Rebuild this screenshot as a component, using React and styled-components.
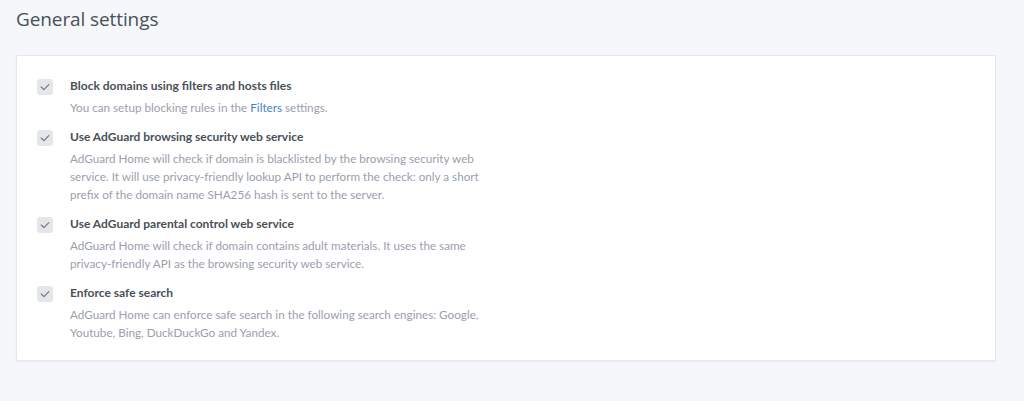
import React from "react";
import styled, { createGlobalStyle } from "styled-components";

const Global = createGlobalStyle`
  html, body {
    margin: 0;
    background: #f5f7fb;
  }
  body {
    font-family: "Open Sans", "Noto Sans", "Liberation Sans", sans-serif;
    -webkit-font-smoothing: antialiased;
  }
`;

const Page = styled.main`
  padding: 7px 28px 40px 16px;
`;

const Heading = styled.h1`
  margin: 0 0 24px;
  font-size: 19px;
  line-height: 24px;
  font-weight: 400;
  color: #495057;
  letter-spacing: -0.1px;
`;

const Card = styled.section`
  background: #fff;
  border: 1px solid #e3e7ee;
  border-radius: 2px;
  box-shadow: 0 1px 2px rgba(0, 0, 0, 0.05);
  padding: 20px 20px 19px;
  display: flex;
  flex-direction: column;
  gap: 11px;
`;

const Row = styled.label`
  display: flex;
  align-items: flex-start;
  gap: 17px;
`;

const Box = styled.span`
  flex: none;
  width: 16px;
  height: 16px;
  margin-top: 3px;
  border-radius: 3px;
  background: #e4e6ea;
  display: flex;
  align-items: center;
  justify-content: center;
`;

const Text = styled.div`
  display: flex;
  flex-direction: column;
  gap: 2px;
  font-family: Lato, "Open Sans", sans-serif;
`;

const Title = styled.div`
  font-size: 12px;
  line-height: 20px;
  font-weight: 700;
  color: #495057;
`;

const Desc = styled.div`
  max-width: 430px;
  font-size: 11.7px;
  line-height: 18px;
  color: #9aa0ac;
`;

const Link = styled.a`
  color: #467fcf;
  text-decoration: none;
`;

const Check = () => (
  <svg width="12" height="12" viewBox="0 0 12 12">
    <polyline
      points="2.2,6 4.9,8.7 9.8,3.6"
      fill="none"
      stroke="#6f747c"
      strokeWidth="1.1"
      strokeLinecap="round"
      strokeLinejoin="round"
    />
  </svg>
);

const settings = [
  {
    title: "Block domains using filters and hosts files",
    desc: (
      <>
        You can setup blocking rules in the <Link href="#">Filters</Link> settings.
      </>
    ),
  },
  {
    title: "Use AdGuard browsing security web service",
    desc: "AdGuard Home will check if domain is blacklisted by the browsing security web service. It will use privacy-friendly lookup API to perform the check: only a short prefix of the domain name SHA256 hash is sent to the server.",
  },
  {
    title: "Use AdGuard parental control web service",
    desc: "AdGuard Home will check if domain contains adult materials. It uses the same privacy-friendly API as the browsing security web service.",
  },
  {
    title: "Enforce safe search",
    desc: "AdGuard Home can enforce safe search in the following search engines: Google, Youtube, Bing, DuckDuckGo and Yandex.",
  },
];

const App = () => (
  <Page>
    <Global />
    <Heading>General settings</Heading>
    <Card>
      {settings.map((s) => (
        <Row key={s.title}>
          <Box>
            <Check />
          </Box>
          <Text>
            <Title>{s.title}</Title>
            <Desc>{s.desc}</Desc>
          </Text>
        </Row>
      ))}
    </Card>
  </Page>
);

export default App;
